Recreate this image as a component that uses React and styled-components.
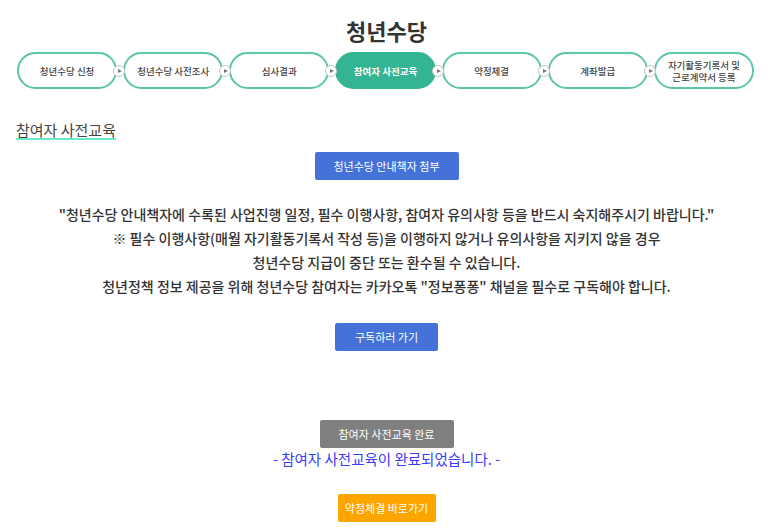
import styled, { createGlobalStyle } from 'styled-components';

const steps = [
  '청년수당 신청',
  '청년수당 사전조사',
  '심사결과',
  '참여자 사전교육',
  '약정체결',
  '계좌발급',
  '자기활동기록서 및\n근로계약서 등록',
];

const ACTIVE = 3;

function App() {
  return (
    <Page>
      <GlobalStyle />
      <Title>청년수당</Title>
      <StepRow>
        {steps.map((label, i) => (
          <Step key={label} $active={i === ACTIVE}>
            {i > 0 && <Arrow />}
            {label}
          </Step>
        ))}
      </StepRow>

      <SectionTitle>참여자 사전교육</SectionTitle>

      <Center>
        <Button $color="#4472d8" $w={144}>청년수당 안내책자 첨부</Button>
        <Notice>
          "청년수당 안내책자에 수록된 사업진행 일정, 필수 이행사항, 참여자 유의사항 등을 반드시 숙지해주시기 바랍니다."
          <br />
          ※ 필수 이행사항(매월 자기활동기록서 작성 등)을 이행하지 않거나 유의사항을 지키지 않을 경우
          <br />
          청년수당 지급이 중단 또는 환수될 수 있습니다.
          <br />
          청년정책 정보 제공을 위해 청년수당 참여자는 카카오톡 "정보퐁퐁" 채널을 필수로 구독해야 합니다.
        </Notice>
        <Button $color="#4472d8" $w={103} $mt={25}>구독하러 가기</Button>
        <Button $color="#7f7f7f" $w={134} $mt={69}>참여자 사전교육 완료</Button>
        <DoneText>- 참여자 사전교육이 완료되었습니다. -</DoneText>
        <Button $color="#ffa500" $w={98} $mt={25}>약정체결 바로가기</Button>
      </Center>
    </Page>
  );
}

export default App;

const GlobalStyle = createGlobalStyle`
  body {
    margin: 0;
    background: #fff;
    font-family: 'Noto Sans CJK KR', 'Noto Sans', sans-serif;
    color: #333;
  }
`;

const Page = styled.div`
  width: 773px;
  padding-top: 18px;
  padding-bottom: 10px;
`;

const Title = styled.h1`
  margin: 0;
  text-align: center;
  font-size: 22px;
  line-height: 24px;
  font-weight: 700;
  color: #333;
`;

const StepRow = styled.div`
  display: flex;
  gap: 6px;
  margin: 10px 19px 0 17px;
`;

const Step = styled.div`
  position: relative;
  flex: 1;
  height: 37px;
  box-sizing: border-box;
  border: 2px solid #5cc5a6;
  border-radius: 19px;
  display: flex;
  align-items: center;
  justify-content: center;
  text-align: center;
  white-space: pre-line;
  font-size: 9.5px;
  line-height: 12px;
  font-weight: ${(p) => (p.$active ? 700 : 500)};
  color: ${(p) => (p.$active ? '#fff' : '#444')};
  background: ${(p) => (p.$active ? '#33b593' : '#fff')};
  border-color: ${(p) => (p.$active ? '#33b593' : '#5cc5a6')};
`;

const Arrow = styled.span`
  position: absolute;
  left: -12px;
  top: 50%;
  width: 10px;
  height: 10px;
  margin-top: -6px;
  border: 1px solid #c8c8c8;
  border-radius: 50%;
  background: #fff;
  z-index: 1;
  &::after {
    content: '';
    position: absolute;
    left: 4px;
    top: 3px;
    border-left: 4px solid #777;
    border-top: 2px solid transparent;
    border-bottom: 2px solid transparent;
  }
`;

const SectionTitle = styled.h2`
  margin: 31px 0 0 16px;
  font-size: 15px;
  line-height: 20px;
  font-weight: 400;
  color: #444;
  text-decoration: underline;
  text-decoration-color: #6ae6c9;
  text-decoration-thickness: 2px;
  text-underline-offset: 2px;
`;

const Center = styled.div`
  display: flex;
  flex-direction: column;
  align-items: center;
  margin-top: 12px;
`;

const Button = styled.button`
  width: ${(p) => p.$w}px;
  height: 28px;
  margin-top: ${(p) => p.$mt || 0}px;
  border: none;
  border-radius: 2px;
  background: ${(p) => p.$color};
  color: #fff;
  font-family: inherit;
  font-size: 11px;
  padding: 0;
  cursor: pointer;
`;

const Notice = styled.p`
  margin: 22px 0 0;
  text-align: center;
  font-size: 14px;
  line-height: 24px;
  font-weight: 500;
  color: #333;
`;

const DoneText = styled.p`
  margin: 1px 0 0;
  font-size: 14.5px;
  line-height: 20px;
  color: #3a3aff;
`;
